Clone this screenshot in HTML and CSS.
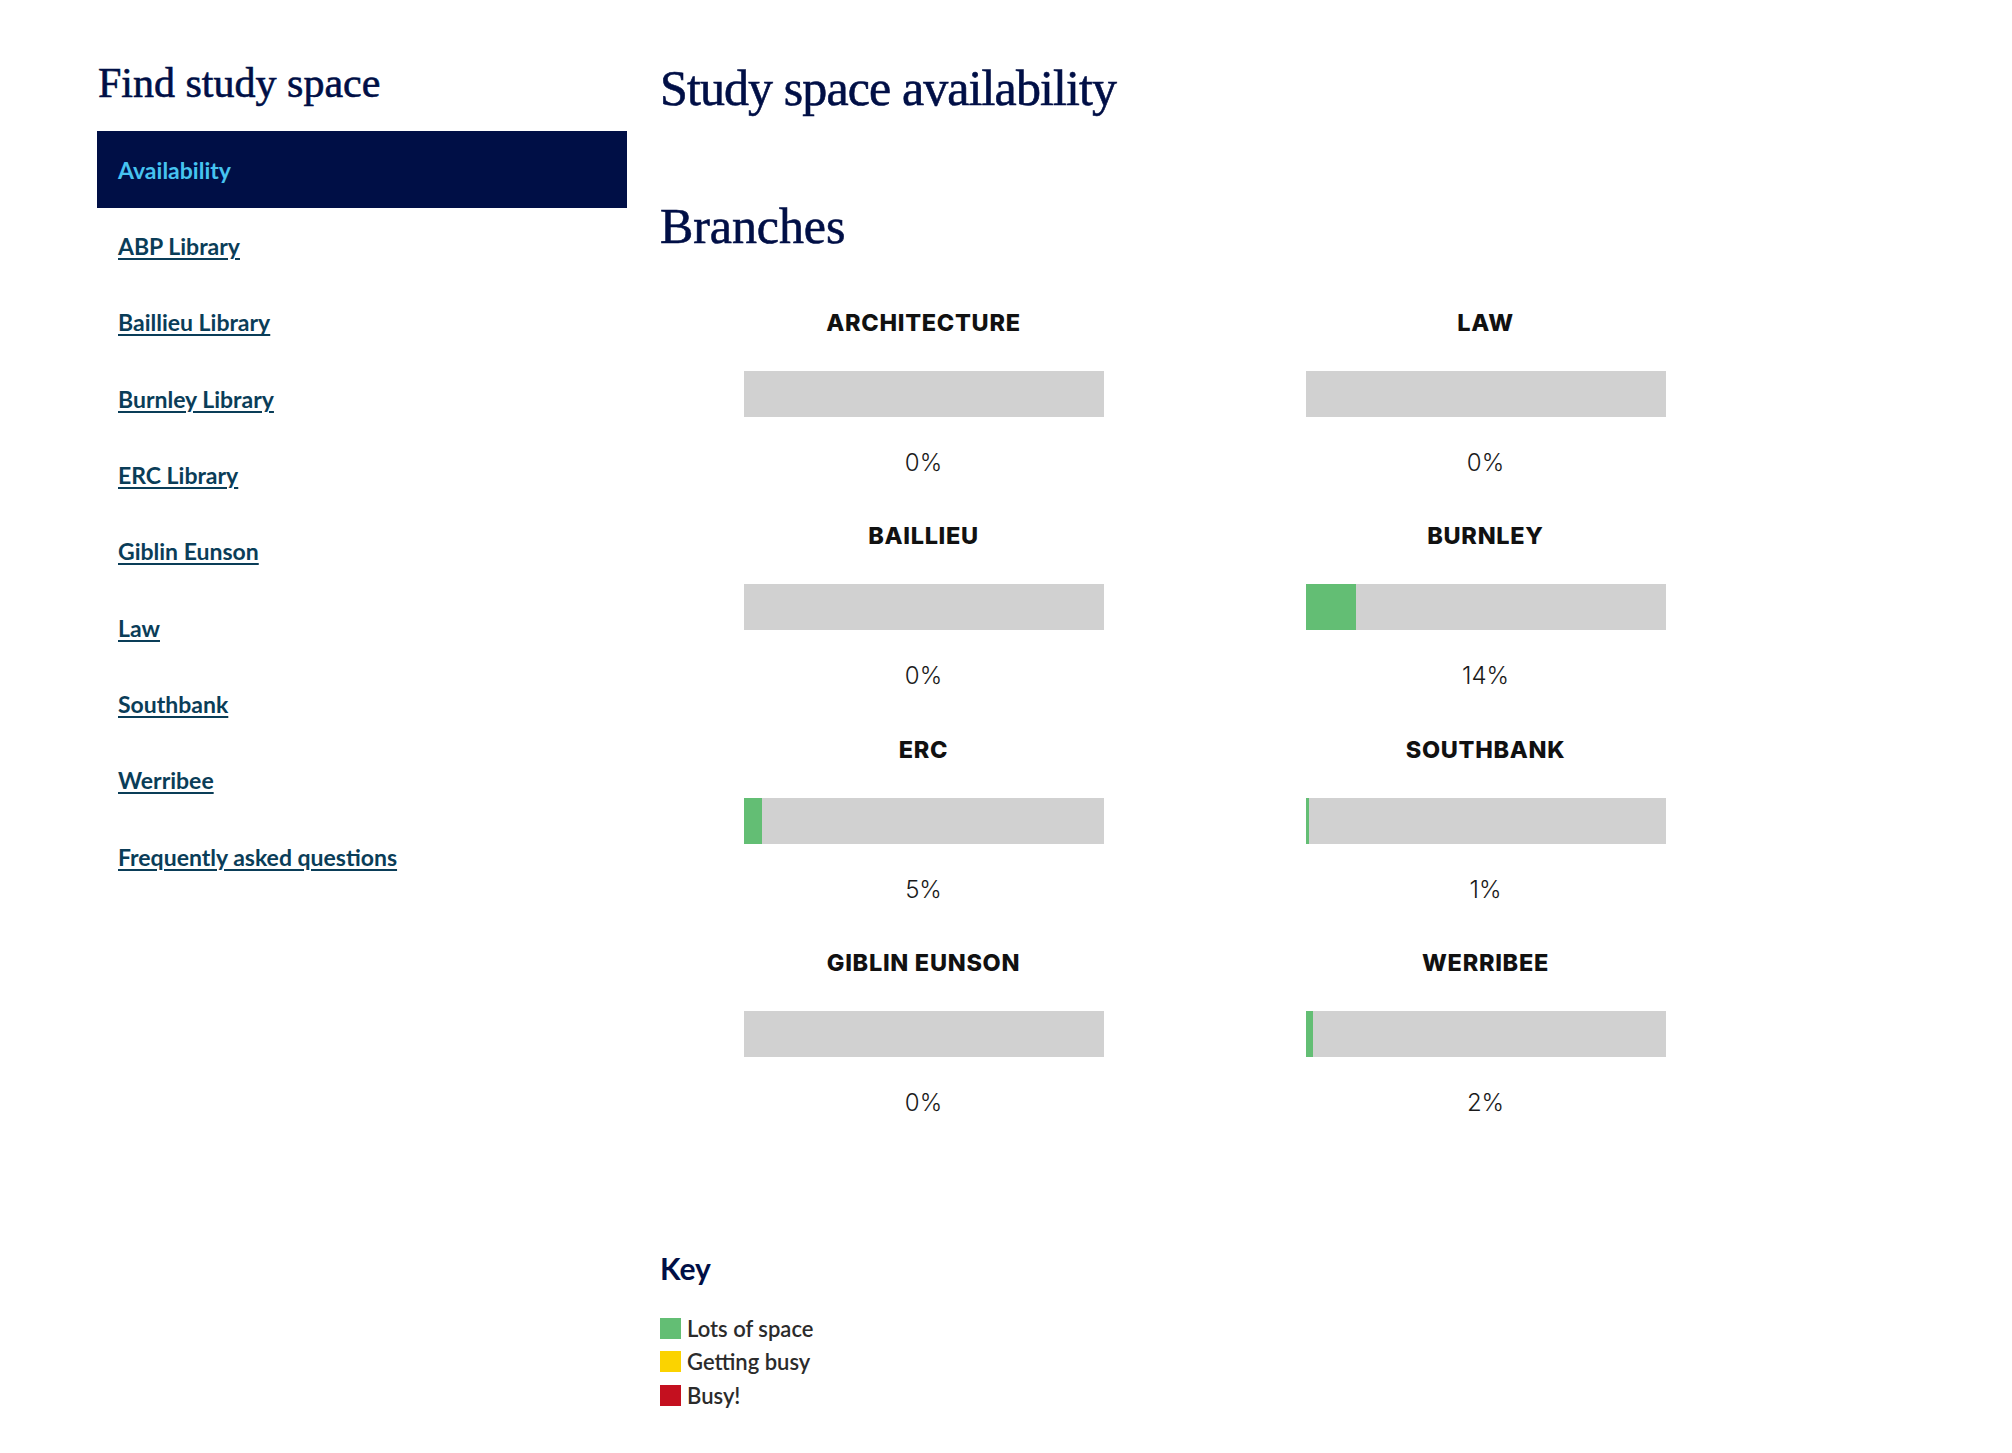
FILE: index.html
```html
<!DOCTYPE html>
<html lang="en">
<head>
<meta charset="utf-8">
<title>Study space availability</title>
<link rel="stylesheet" href="styles.css">
</head>
<body>
<div class="page">
  <aside class="sidebar">
    <h2 class="side-title">Find study space</h2>
    <nav>
      <ul class="side-nav">
        <li class="nav-item active"><a href="#">Availability</a></li>
        <li class="nav-item"><a href="#">ABP Library</a></li>
        <li class="nav-item"><a href="#">Baillieu Library</a></li>
        <li class="nav-item"><a href="#">Burnley Library</a></li>
        <li class="nav-item"><a href="#">ERC Library</a></li>
        <li class="nav-item"><a href="#">Giblin Eunson</a></li>
        <li class="nav-item"><a href="#">Law</a></li>
        <li class="nav-item"><a href="#">Southbank</a></li>
        <li class="nav-item"><a href="#">Werribee</a></li>
        <li class="nav-item"><a href="#">Frequently asked questions</a></li>
      </ul>
    </nav>
  </aside>
  <main class="content">
    <h1 class="page-title">Study space availability</h1>
    <h2 class="section-title">Branches</h2>
    <div class="branches">
      <div class="branch">
        <div class="branch-name">ARCHITECTURE</div>
        <div class="bar"><div class="fill" style="width:0%"></div></div>
        <div class="pct">0%</div>
      </div>
      <div class="branch">
        <div class="branch-name">LAW</div>
        <div class="bar"><div class="fill" style="width:0%"></div></div>
        <div class="pct">0%</div>
      </div>
      <div class="branch">
        <div class="branch-name">BAILLIEU</div>
        <div class="bar"><div class="fill" style="width:0%"></div></div>
        <div class="pct">0%</div>
      </div>
      <div class="branch">
        <div class="branch-name">BURNLEY</div>
        <div class="bar"><div class="fill" style="width:14%"></div></div>
        <div class="pct">14%</div>
      </div>
      <div class="branch">
        <div class="branch-name">ERC</div>
        <div class="bar"><div class="fill" style="width:5%"></div></div>
        <div class="pct">5%</div>
      </div>
      <div class="branch">
        <div class="branch-name">SOUTHBANK</div>
        <div class="bar"><div class="fill" style="width:1%"></div></div>
        <div class="pct">1%</div>
      </div>
      <div class="branch">
        <div class="branch-name">GIBLIN EUNSON</div>
        <div class="bar"><div class="fill" style="width:0%"></div></div>
        <div class="pct">0%</div>
      </div>
      <div class="branch">
        <div class="branch-name">WERRIBEE</div>
        <div class="bar"><div class="fill" style="width:2%"></div></div>
        <div class="pct">2%</div>
      </div>
    </div>
    <section class="key">
      <h3 class="key-title">Key</h3>
      <ul class="key-list">
        <li class="key-item"><span class="swatch swatch-green"></span>Lots of space</li>
        <li class="key-item"><span class="swatch swatch-yellow"></span>Getting busy</li>
        <li class="key-item"><span class="swatch swatch-red"></span>Busy!</li>
      </ul>
    </section>
  </main>
</div>
</body>
</html>
```

FILE: styles.css
```css
* {
  box-sizing: border-box;
}

html, body {
  margin: 0;
  padding: 0;
  background: #ffffff;
}

body {
  font-family: Lato, "Open Sans", sans-serif;
  color: #2b2b2b;
}

.page {
  display: flex;
  align-items: flex-start;
  padding: 58px 0 0 97px;
}

.sidebar {
  width: 530px;
  flex: 0 0 530px;
}

.side-title {
  margin: 0 0 0 1px;
  font-family: "Liberation Serif", "DejaVu Serif", serif;
  font-weight: 400;
  font-size: 42px;
  line-height: 50px;
  letter-spacing: 0;
  color: #000f46;
  -webkit-text-stroke: 0.6px #000f46;
}

.side-nav {
  list-style: none;
  margin: 23px 0 0 0;
  padding: 0;
}

.nav-item {
  height: 76.3px;
  display: flex;
  align-items: center;
  padding-left: 21px;
}

.nav-item a {
  font-family: Lato, "Open Sans", sans-serif;
  font-weight: 700;
  font-size: 23px;
  letter-spacing: 0;
  color: #0a3d58;
  text-decoration: underline;
  text-decoration-thickness: 1.5px;
  text-underline-offset: 3px;
}

.nav-item.active {
  background: #000f46;
  height: 77px;
}

.nav-item.active a {
  color: #46c3f0;
  text-decoration: none;
}

.content {
  margin-left: 33px;
  flex: 1 1 auto;
}

.page-title {
  margin: 0;
  font-family: "Liberation Serif", "DejaVu Serif", serif;
  font-weight: 400;
  font-size: 50px;
  line-height: 60px;
  letter-spacing: -0.9px;
  color: #000f46;
  -webkit-text-stroke: 0.6px #000f46;
}

.section-title {
  margin: 78px 0 0 0;
  font-family: "Liberation Serif", "DejaVu Serif", serif;
  font-weight: 400;
  font-size: 50px;
  line-height: 60px;
  letter-spacing: -0.1px;
  color: #000f46;
  -webkit-text-stroke: 0.6px #000f46;
}

.branches {
  display: grid;
  grid-template-columns: 527px 527px;
  column-gap: 35px;
  row-gap: 43.3px;
  margin-top: 52px;
}

.branch {
  display: flex;
  flex-direction: column;
  align-items: center;
}

.branch-name {
  font-family: Inter, "DejaVu Sans", sans-serif;
  font-weight: 800;
  font-size: 23.5px;
  line-height: 30px;
  letter-spacing: 0.7px;
  color: #111111;
}

.bar {
  width: 360px;
  height: 46px;
  margin-top: 33px;
  background: #d1d1d1;
  display: flex;
}

.fill {
  height: 100%;
  background: #63be74;
}

.pct {
  margin-top: 31px;
  font-family: Inter, "DejaVu Sans", sans-serif;
  font-weight: 300;
  font-size: 24px;
  line-height: 30px;
  color: #1a1a1a;
}

.key {
  margin-top: 132px;
}

.key-title {
  margin: 0;
  font-family: Lato, "Open Sans", sans-serif;
  font-weight: 700;
  font-size: 30px;
  line-height: 36px;
  color: #000f46;
}

.key-list {
  list-style: none;
  margin: 26px 0 0 0;
  padding: 0;
}

.key-item {
  display: flex;
  align-items: center;
  gap: 6px;
  height: 33.4px;
  font-family: Lato, "Open Sans", sans-serif;
  font-weight: 600;
  font-size: 22px;
  color: #2b2b2b;
}

.swatch {
  width: 21px;
  height: 21px;
  flex: 0 0 21px;
}

.swatch-green {
  background: #63be74;
}

.swatch-yellow {
  background: #fbd300;
}

.swatch-red {
  background: #c4101f;
}
```
